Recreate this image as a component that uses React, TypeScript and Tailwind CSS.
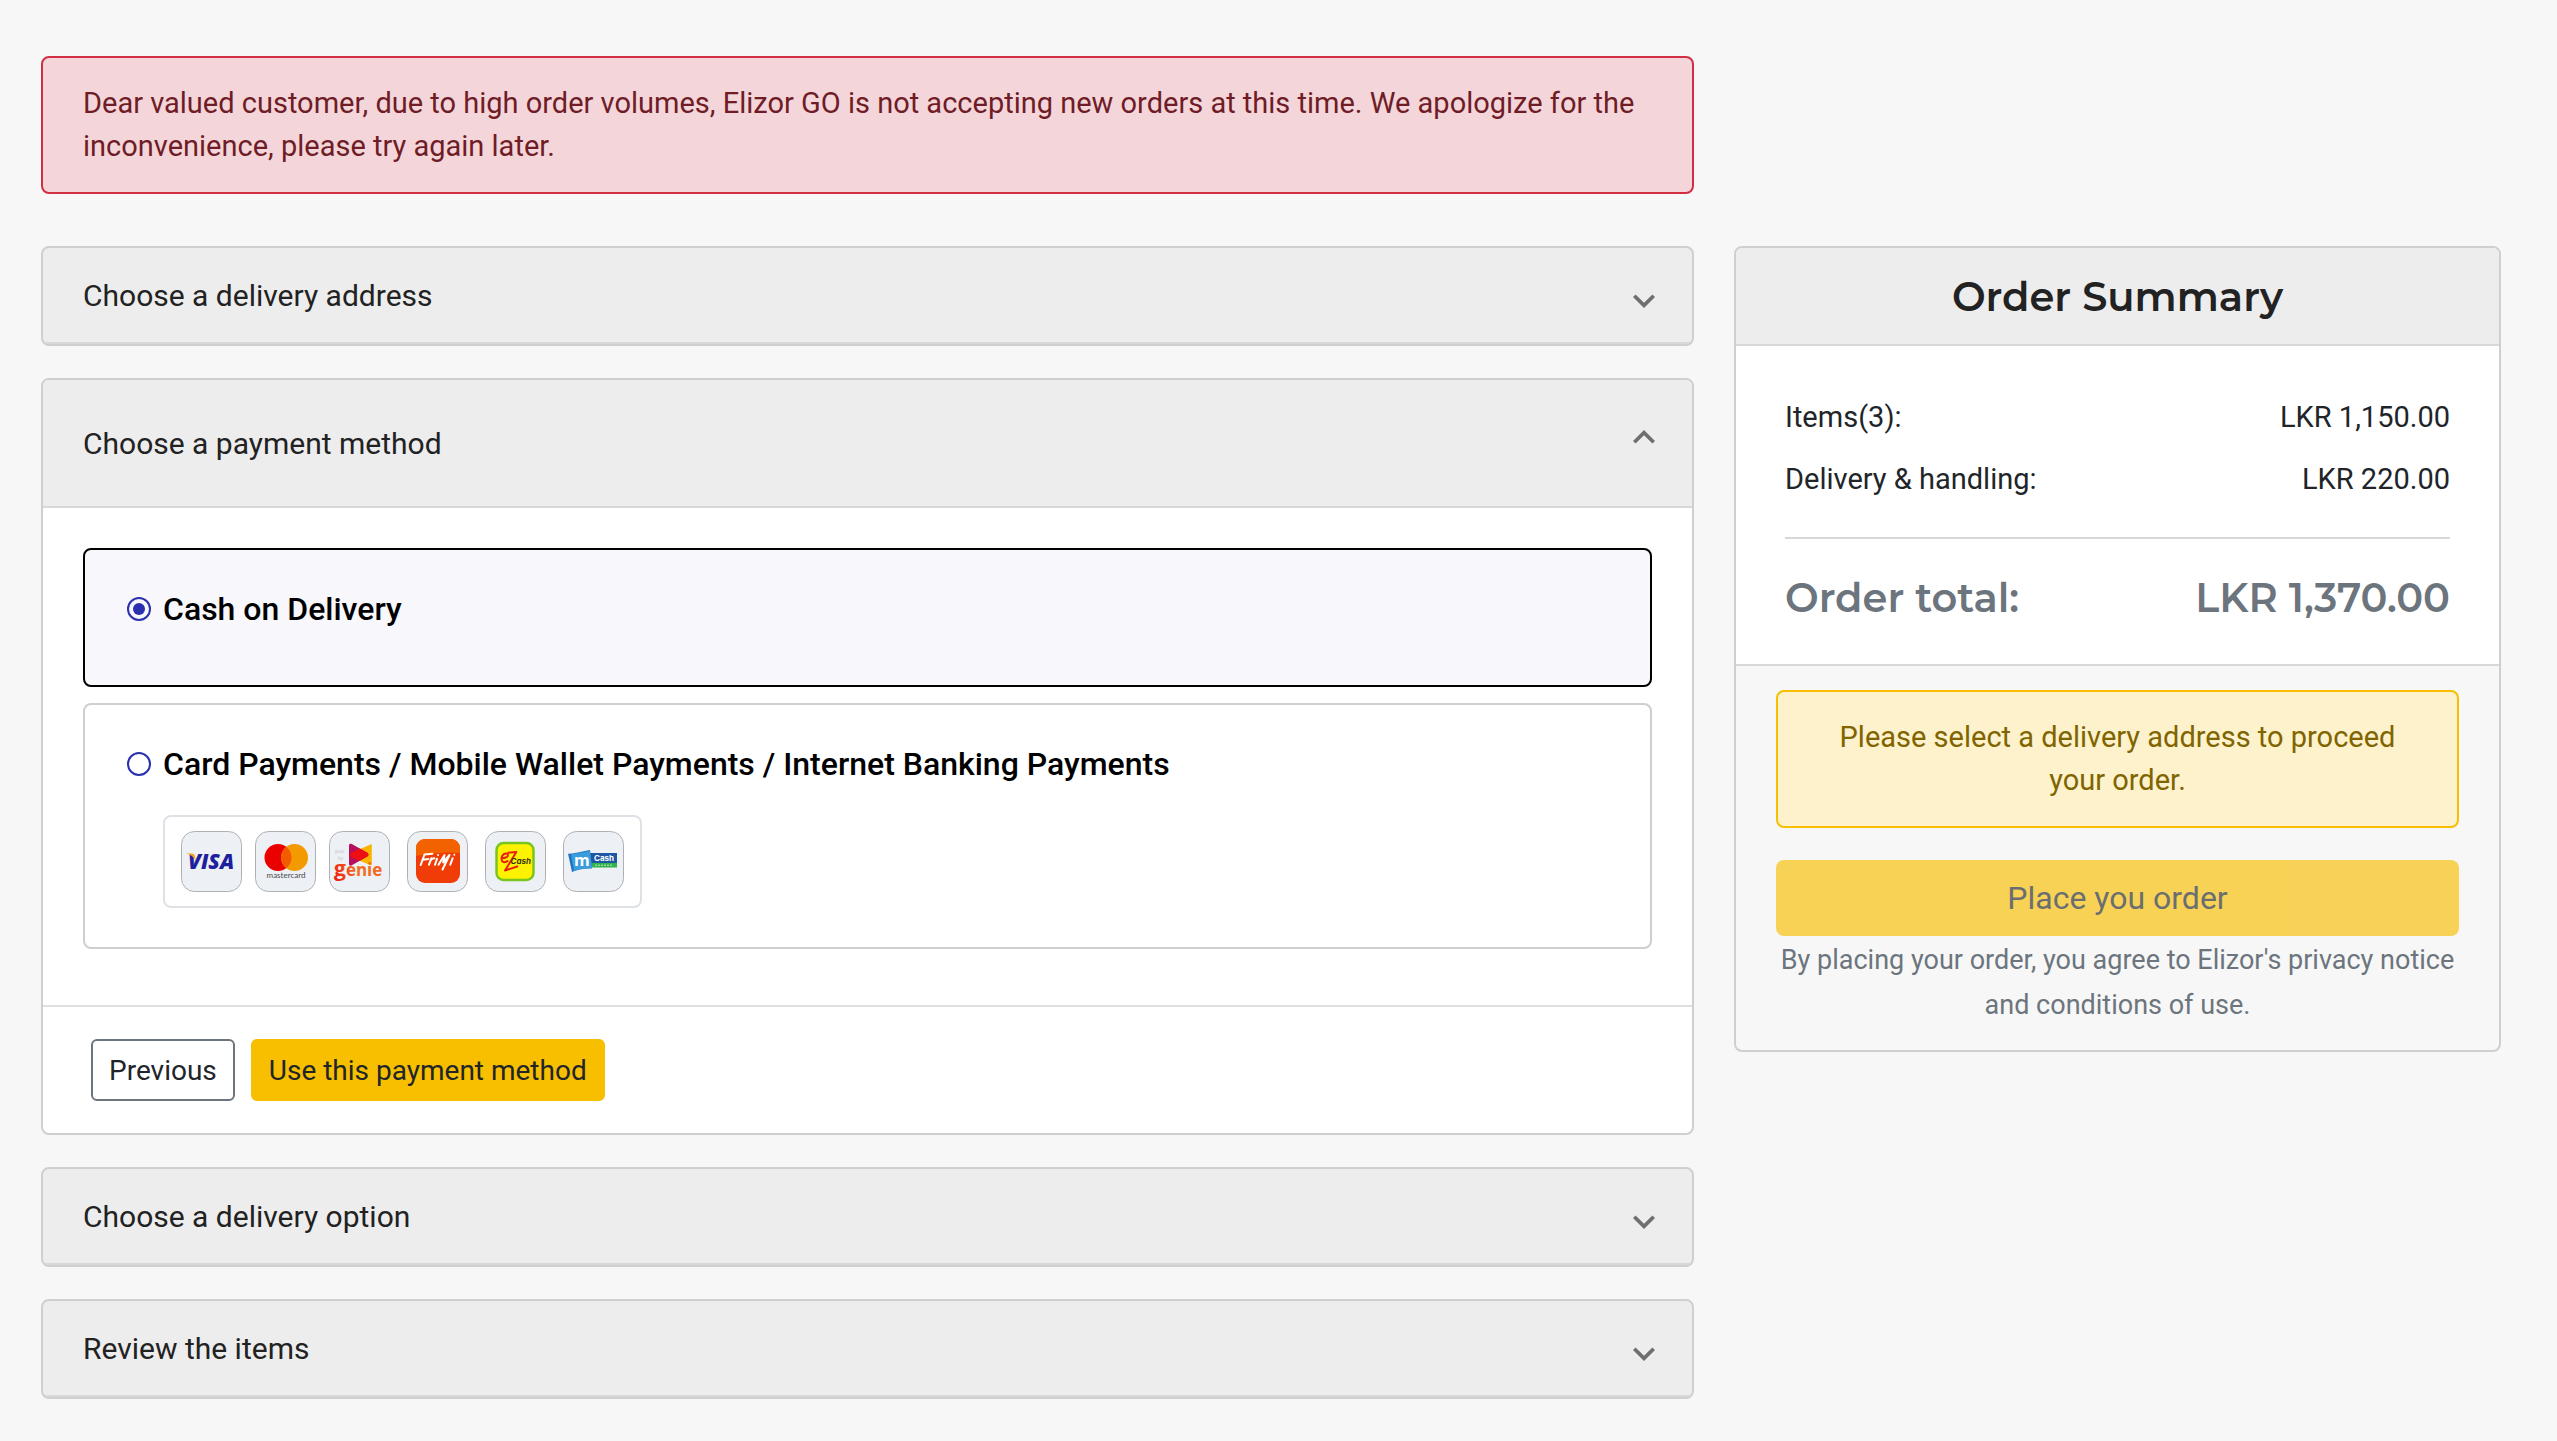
import { useState } from 'react';
import type { ReactNode } from 'react';

function Chevron({ up = false }: { up?: boolean }) {
  return (
    <svg viewBox="0 0 22 26" aria-hidden="true" className={up ? 'h-[26px] w-[22px] rotate-180' : 'h-[26px] w-[22px]'}>
      <path d="M19.4 12.4 11 20.8 2.6 12.4 0 15l11 11 11-11z" fill="#6f6f6f" />
    </svg>
  );
}

function CollapsedPanel({ title }: { title: string }) {
  return (
    <section className="overflow-hidden rounded-lg border-2 border-[#cfcfcf] bg-[#ededed]">
      <button
        type="button"
        aria-expanded={false}
        className="flex h-24 w-full items-center justify-between border-b-2 border-[#d8d8d8] pr-[37px] pl-10 text-left text-[30px] text-[#222]"
      >
        {title}
        <Chevron />
      </button>
    </section>
  );
}

function PaymentOption({
  id,
  label,
  checked,
  onSelect,
  children,
}: {
  id: string;
  label: string;
  checked: boolean;
  onSelect: () => void;
  children?: ReactNode;
}) {
  return (
    <div
      className={
        checked
          ? 'rounded-lg border-2 border-black bg-[#f7f7fc] px-[42px] pt-[35px] pb-[52px]'
          : 'rounded-lg border-2 border-[#cfcfcf] bg-white px-[42px] pt-[35px] pb-[39px]'
      }
    >
      <div className="flex items-center gap-3">
        <input
          type="radio"
          id={id}
          name="payment"
          checked={checked}
          onChange={onSelect}
          className="size-6 shrink-0 appearance-none rounded-full border-2 border-[#2a30b0] bg-clip-content p-1 checked:bg-[#2a30b0]"
        />
        <label htmlFor={id} className="text-[32px] leading-12 font-medium text-black">
          {label}
        </label>
      </div>
      {children}
    </div>
  );
}

function Tile({ label, children }: { label: string; children: ReactNode }) {
  return (
    <svg viewBox="0 0 61 61" role="img" aria-label={label} className="size-[61px]">
      <rect x="0.5" y="0.5" width="60" height="60" rx="13" fill="#edf0f4" stroke="#aeb0b4" />
      {children}
    </svg>
  );
}

function PaymentLogos() {
  return (
    <div className="mt-[27px] ml-9 flex w-fit gap-[17px] rounded-lg border-2 border-[#dee2e6] px-4 py-[14px]">
      <div className="flex gap-[13px]">
        <Tile label="Visa">
          <text x="7" y="38" fill="#1d209c" fontFamily="Open Sans, sans-serif" fontSize="21" fontWeight="800" fontStyle="italic">
            VISA
          </text>
          <path d="M5 22.500h5.500c2 0 3 .8 3.400 2.600l1 4.600C13 26 9.500 23.500 5 22.500z" fill="#f2a31c" />
        </Tile>
        <Tile label="Mastercard">
          <circle cx="23" cy="26.500" r="13.500" fill="#eb0000" />
          <circle cx="39.500" cy="26.500" r="13.500" fill="#f39a00" />
          <path d="M31.250 15.800a13.500 13.500 0 0 1 0 21.400 13.500 13.500 0 0 1 0-21.400z" fill="#f35b00" />
          <text x="31" y="47" textAnchor="middle" fill="#4a4a4c" fontFamily="Lato, sans-serif" fontSize="8">
            mastercard
          </text>
        </Tile>
        <Tile label="Genie">
          <defs>
            <linearGradient id="genie" gradientUnits="userSpaceOnUse" x1="6" x2="52" y1="50" y2="32">
              <stop offset="0" stopColor="#ee1c12" />
              <stop offset="0.500" stopColor="#f2701e" />
              <stop offset="1" stopColor="#f2641e" />
            </linearGradient>
          </defs>
          <path d="M41 13.800c.8-.8 1.800-.6 1.800.6v19c0 1.200-1 1.400-1.800.6L22 26c-1.500-1-1.500-3 0-4z" fill="#f7b500" />
          <path d="M20 14.500c0-1.600 1.500-2.200 2.800-1.400l15.500 8.700c1.600 1 1.600 2.900 0 3.800l-15.500 8.700c-1.300.8-2.800.2-2.800-1.400z" fill="#b50f5e" />
          <path d="M30.500 17.500 38.300 21.800c1.600 1 1.600 2.900 0 3.800L30.500 30 22 26c-1.500-1-1.500-3 0-4z" fill="#ee0f14" />
          <text x="6" y="22" fill="#cfd1d6" fontFamily="Lato, sans-serif" fontSize="6" fontWeight="700">
            pay
          </text>
          <text x="9" y="29" fill="#cfd1d6" fontFamily="Lato, sans-serif" fontSize="5" fontWeight="700">
            by
          </text>
          <text x="5" y="45" fill="url(#genie)" fontFamily="Open Sans, sans-serif" fontSize="17" fontWeight="700">
            <tspan fontSize="21">g</tspan>enie
          </text>
        </Tile>
      </div>
      <div className="flex gap-[17px]">
        <Tile label="FriMi">
          <rect x="9" y="8" width="44" height="44" rx="9" fill="#f03c06" />
          <path d="M9 25V17a9 9 0 0 1 9-9h26a9 9 0 0 1 9 9v5q-22-2-44 3z" fill="#f26200" />
          <g fill="none" stroke="#fff" strokeWidth="2" strokeLinecap="round" strokeLinejoin="round">
            <path d="M13.700 34 17.500 23.500l8-.8M15.500 28.700l6-.8M22 33.700l2.400-6.400M23.400 29.500q1.600-2.400 4-2.200M28 33.700l2-6" />
            <path d="M31.500 33.700 37.500 24l-1.300 7.500L42.500 24 35.500 38.500M43.300 33.700l2.400-6.500" />
            <path d="M31 24v.1M47.300 23.700v.1" />
          </g>
        </Tile>
        <Tile label="eZ Cash">
          <rect x="11.500" y="12" width="37" height="37" rx="7" fill="#fff200" stroke="#79c520" strokeWidth="2.500" />
          <g fill="none" stroke="#e8200e" strokeWidth="2" strokeLinejoin="round">
            <path d="M16.500 27.300q6.500-.3 6.500-3.300-1-2.500-4-1-3.800 3-1.800 7.300 2.800 2.300 6-.8" />
            <path d="m22.500 21.800 8.800-.8L20 39.500l13-4.300" />
          </g>
          <text x="25.500" y="33" fill="#33370a" fontFamily="Inter, sans-serif" fontSize="8" fontWeight="700" fontStyle="italic">
            Cash
          </text>
        </Tile>
        <Tile label="mCash">
          <path d="M27 22h27v14H27z" fill="#1d57a5" />
          <path d="M27 32h27v4.500H27z" fill="#2fb34a" />
          <path d="M5 22.500q2 1 22-3.500l2 18.500q-12-.5-20 3.500z" fill="#1e74bd" />
          <path d="M8 23.500 27 20l2 17q-10 0-18 3z" fill="#3b9ddd" />
          <text x="11" y="35" fill="#fff" fontFamily="Open Sans, sans-serif" fontSize="16" fontWeight="700">
            m
          </text>
          <text x="31" y="30" fill="#fff" fontFamily="Inter, sans-serif" fontSize="8" fontWeight="700">
            Cash
          </text>
          <path d="M32 34.200h18" stroke="#bfe8c6" strokeWidth="1" strokeDasharray="2 1" />
        </Tile>
      </div>
    </div>
  );
}

export default function App() {
  const [method, setMethod] = useState('cash');

  return (
    <main className="min-h-screen bg-[#f7f7f7] pt-14 pr-14 pb-[42px] pl-[41px] font-['Roboto',sans-serif] text-[29px] leading-[43px] text-[#212529]">
      <div className="grid grid-cols-[1653fr_767fr] gap-x-10">
        <div
          role="alert"
          className="mb-[52px] rounded-lg border-2 border-[#d12f44] bg-[#f4d6da] px-10 py-6 text-[#6f1c26]"
        >
          Dear valued customer, due to high order volumes, Elizor GO is not accepting new orders at this time. We
          apologize for the inconvenience, please try again later.
        </div>

        <div className="col-start-1 flex flex-col gap-8">
          <CollapsedPanel title="Choose a delivery address" />

          <section className="overflow-hidden rounded-lg border-2 border-[#cfcfcf] bg-white">
            <button
              type="button"
              aria-expanded={true}
              className="flex h-32 w-full items-center justify-between border-b-2 border-[#d8d8d8] bg-[#ededed] pr-[37px] pl-10 text-left text-[30px] text-[#222]"
            >
              Choose a payment method
              <Chevron up />
            </button>
            <div className="flex flex-col gap-4 px-10 pt-10 pb-14">
              <PaymentOption
                id="pay-cash"
                label="Cash on Delivery"
                checked={method === 'cash'}
                onSelect={() => setMethod('cash')}
              />
              <PaymentOption
                id="pay-card"
                label="Card Payments / Mobile Wallet Payments / Internet Banking Payments"
                checked={method === 'card'}
                onSelect={() => setMethod('card')}
              >
                <PaymentLogos />
              </PaymentOption>
            </div>
            <div className="flex gap-4 border-t-2 border-[#dfdfdf] px-12 py-8 text-[28px]">
              <button type="button" className="h-[62px] rounded-md border-2 border-[#6c757d] px-4">
                Previous
              </button>
              <button type="button" className="h-[62px] rounded-md border-2 border-[#f7bf00] bg-[#f7bf00] px-4">
                Use this payment method
              </button>
            </div>
          </section>

          <CollapsedPanel title="Choose a delivery option" />
          <CollapsedPanel title="Review the items" />
        </div>

        <aside className="self-start overflow-hidden rounded-lg border-2 border-[#cfcfcf]">
          <h2 className="flex h-[98px] items-center justify-center border-b-2 border-[#d8d8d8] bg-[#ededed] font-['Montserrat',sans-serif] text-[40px] font-semibold text-[#222]">
            Order Summary
          </h2>
          <div className="border-b-2 border-[#d8d8d8] bg-white px-[49px] pt-[50px] pb-[41px]">
            <dl>
              <div className="flex justify-between">
                <dt>Items(3):</dt>
                <dd>LKR 1,150.00</dd>
              </div>
              <div className="mt-[19px] flex justify-between">
                <dt>Delivery &amp; handling:</dt>
                <dd>LKR 220.00</dd>
              </div>
              <div className="mt-9 flex justify-between border-t-2 border-[#d8d8d8] pt-[34px] font-['Montserrat',sans-serif] text-[40px] leading-[50px] font-semibold text-[#6c757d]">
                <dt>Order total:</dt>
                <dd>LKR 1,370.00</dd>
              </div>
            </dl>
          </div>
          <div className="px-10 pt-6 pb-[22px] text-center">
            <div role="alert" className="rounded-lg border-2 border-[#f7bf00] bg-[#fdf2cc] px-10 py-6 text-[#806400]">
              Please select a delivery address to proceed your order.
            </div>
            <button
              type="button"
              disabled
              className="mt-8 h-[76px] w-full rounded-lg bg-[#f7bf00] text-[32px] opacity-65"
            >
              Place you order
            </button>
            <p className="mt-0.5 text-[27px] leading-[45px] text-[#6c757d]">
              By placing your order, you agree to Elizor's privacy notice and conditions of use.
            </p>
          </div>
        </aside>
      </div>
    </main>
  );
}
